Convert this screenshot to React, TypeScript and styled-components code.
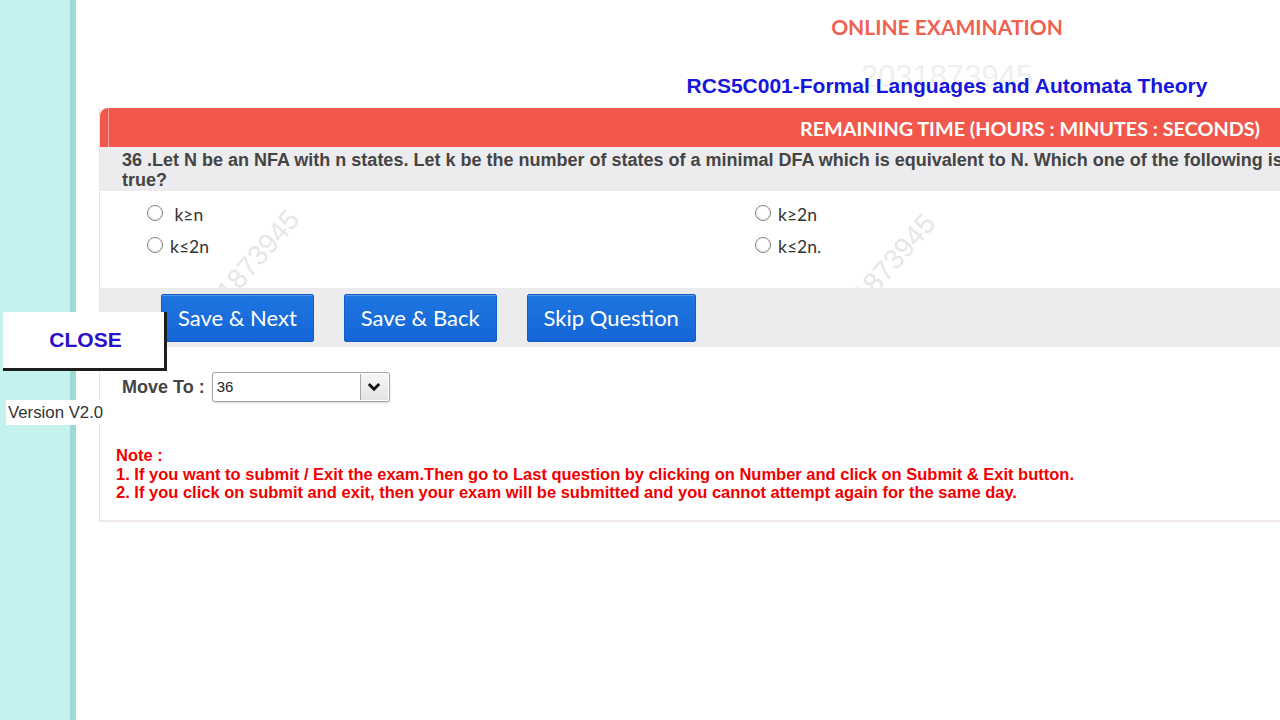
import React from 'react';
import styled, { createGlobalStyle } from 'styled-components';

const Global = createGlobalStyle`
  html, body { margin: 0; padding: 0; overflow: hidden; background: #fff; }
  body { font-family: Arial, "Liberation Sans", sans-serif; }
  * { box-sizing: border-box; }
`;

const Page = styled.div`
  position: relative;
  display: flex;
  width: 1818px;
  height: 720px;
`;

const Sidebar = styled.aside`
  flex: none;
  width: 76px;
  height: 100%;
  background: #c3f2ef;
  border-right: 6px solid #9fd9d4;
`;

const Main = styled.main`
  position: relative;
  flex: none;
  width: 1742px;
  display: flex;
  flex-direction: column;
`;

const Header = styled.header`
  position: relative;
  height: 108px;
  padding-top: 15px;
  display: flex;
  flex-direction: column;
  align-items: center;
`;

const HeaderMark = styled.span`
  position: absolute;
  left: 50%;
  top: 60px;
  transform: translateX(-50%);
  font: 400 31px/34px "Liberation Sans", Arial, sans-serif;
  color: #efefef;
  white-space: nowrap;
`;

const ExamTitle = styled.h1`
  position: relative;
  margin: 0;
  font: 700 21px/24px Lato, "Open Sans", sans-serif;
  color: #ef6150;
`;

const Subject = styled.h2`
  position: relative;
  margin: 35px 0 0;
  font: 700 21px/24px "Liberation Sans", Arial, sans-serif;
  color: #1616dc;
`;

const WaterMark = styled.span<{ $x: number; $y: number }>`
  position: absolute;
  z-index: 0;
  left: ${(p) => p.$x}px;
  top: ${(p) => p.$y}px;
  transform: translate(-50%, -50%) rotate(-49deg);
  font: 400 28px/30px "Liberation Sans", Arial, sans-serif;
  color: #e7e7e7;
  white-space: nowrap;
`;

const Panel = styled.section`
  position: relative;
  z-index: 1;
  margin-left: 23px;
  width: 1213px;
  border-left: 1px solid #ece2e4;
  border-bottom: 2px solid #efe7e9;
  padding-bottom: 18px;
`;

const TimeBar = styled.div`
  position: relative;
  height: 39px;
  background: #f1574a;
  border-top-left-radius: 8px;
  display: flex;
  align-items: center;
  justify-content: flex-end;
  padding-right: 52px;
  font: 700 19.8px/22px Lato, "Open Sans", sans-serif;
  color: #fff;
  &::before {
    content: '';
    position: absolute;
    left: 8px;
    top: 0;
    bottom: 0;
    width: 1px;
    background: rgba(255, 255, 255, 0.45);
  }
`;

const Question = styled.div`
  background: #ececee;
  padding: 3px 0 1px 22px;
  font: 700 18px/20px "Liberation Sans", Arial, sans-serif;
  color: #444;
`;

const Options = styled.div`
  display: grid;
  grid-template-columns: 608px 1fr;
  grid-auto-rows: 32px;
  padding: 6px 0 27px 47px;
`;

const Option = styled.label`
  display: flex;
  align-items: center;
  gap: 7px;
`;

const Radio = styled.input.attrs({ type: 'radio' })`
  appearance: none;
  margin: 0;
  width: 16px;
  height: 16px;
  border-radius: 50%;
  border: 1.5px solid #7f7f7f;
  background: radial-gradient(circle at 50% 35%, #ffffff 45%, #e4e4e4 100%);
`;

const OptionText = styled.span`
  padding-top: 4px;
  font: 400 17.5px/20px Lato, "Open Sans", sans-serif;
  color: #333;
  white-space: pre;
`;

const ButtonBar = styled.div`
  background: #ececee;
  height: 59px;
  padding: 6px 0 5px 61px;
  display: flex;
  gap: 30px;
`;

const ActionButton = styled.button`
  height: 48px;
  padding: 0 16px;
  border: 1px solid #0f5ccb;
  border-radius: 2px;
  background: linear-gradient(#1e76e0, #1565d6);
  box-shadow: inset 0 1px 0 rgba(255, 255, 255, 0.25);
  color: #fff;
  font: 400 22px/24px Lato, "Open Sans", sans-serif;
  cursor: pointer;
`;

const MoveRow = styled.div`
  margin-top: 24px;
  padding-left: 22px;
  display: flex;
  align-items: center;
  gap: 7px;
  height: 31px;
`;

const MoveLabel = styled.span`
  font: 700 18px/20px "Liberation Sans", Arial, sans-serif;
  color: #444;
`;

const SelectBox = styled.div`
  width: 178px;
  height: 30px;
  display: flex;
  align-items: stretch;
  border: 1px solid #a3a3a3;
  border-radius: 3px;
  box-shadow: 0 1px 2px rgba(0, 0, 0, 0.15);
  background: #fff;
  padding: 1px;
`;

const SelectValue = styled.span`
  flex: 1;
  display: flex;
  align-items: center;
  padding-left: 3px;
  font: 400 15px/16px "Liberation Sans", Arial, sans-serif;
  color: #222;
`;

const SelectArrow = styled.span`
  width: 28px;
  display: flex;
  align-items: center;
  justify-content: center;
  border-left: 1px solid #a8a8a8;
  background: linear-gradient(#f6f6f6, #e3e3e3);
`;

const Note = styled.div`
  margin-top: 44px;
  padding-left: 16px;
  font: 700 16.5px/18.5px "Liberation Sans", Arial, sans-serif;
  color: #f20000;
`;

const CloseBox = styled.button`
  position: absolute;
  z-index: 5;
  left: 3px;
  top: 312px;
  width: 164px;
  height: 59px;
  padding: 0 0 0 4px;
  background: #fff;
  border: none;
  border-right: 3px solid #1e1e1e;
  border-bottom: 3px solid #1e1e1e;
  font: 700 21px/24px "Liberation Sans", Arial, sans-serif;
  color: #2a10c8;
  cursor: pointer;
`;

const Version = styled.div`
  position: absolute;
  z-index: 5;
  left: 6px;
  top: 400px;
  width: 97px;
  height: 25px;
  padding-left: 2px;
  display: flex;
  align-items: center;
  background: #fff;
  font: 400 16.8px/18px "Liberation Sans", Arial, sans-serif;
  color: #333;
  white-space: nowrap;
`;

const options = [' k≥n', 'k≥2n', 'k≤2n', 'k≤2n.'];

export default function App() {
  return (
    <>
      <Global />
      <Page>
        <Sidebar />
        <Main>
          <Header>
            <HeaderMark>2031873945</HeaderMark>
            <ExamTitle>ONLINE EXAMINATION</ExamTitle>
            <Subject>RCS5C001-Formal Languages and Automata Theory</Subject>
          </Header>
          <WaterMark $x={167} $y={273}>2031873945</WaterMark>
          <WaterMark $x={803} $y={277}>2031873945</WaterMark>
          <Panel>
            <TimeBar>REMAINING TIME (HOURS : MINUTES : SECONDS)</TimeBar>
            <Question>
              36 .Let N be an NFA with n states. Let k be the number of states of a minimal DFA which is
              equivalent to N. Which one of the following is true?
            </Question>
            <Options>
              {options.map((o) => (
                <Option key={o}>
                  <Radio name="ans" />
                  <OptionText>{o}</OptionText>
                </Option>
              ))}
            </Options>
            <ButtonBar>
              <ActionButton>Save &amp; Next</ActionButton>
              <ActionButton>Save &amp; Back</ActionButton>
              <ActionButton>Skip Question</ActionButton>
            </ButtonBar>
            <MoveRow>
              <MoveLabel>Move To :</MoveLabel>
              <SelectBox>
                <SelectValue>36</SelectValue>
                <SelectArrow>
                  <svg width="14" height="10" viewBox="0 0 14 10">
                    <polyline points="1.8,2 7,7.2 12.2,2" fill="none" stroke="#111" strokeWidth="2.8" />
                  </svg>
                </SelectArrow>
              </SelectBox>
            </MoveRow>
            <Note>
              Note :<br />
              1. If you want to submit / Exit the exam.Then go to Last question by clicking on Number and click on Submit &amp; Exit button.
              <br />
              2. If you click on submit and exit, then your exam will be submitted and you cannot attempt again for the same day.
            </Note>
          </Panel>
        </Main>
        <CloseBox>CLOSE</CloseBox>
        <Version>Version V2.0</Version>
      </Page>
    </>
  );
}
